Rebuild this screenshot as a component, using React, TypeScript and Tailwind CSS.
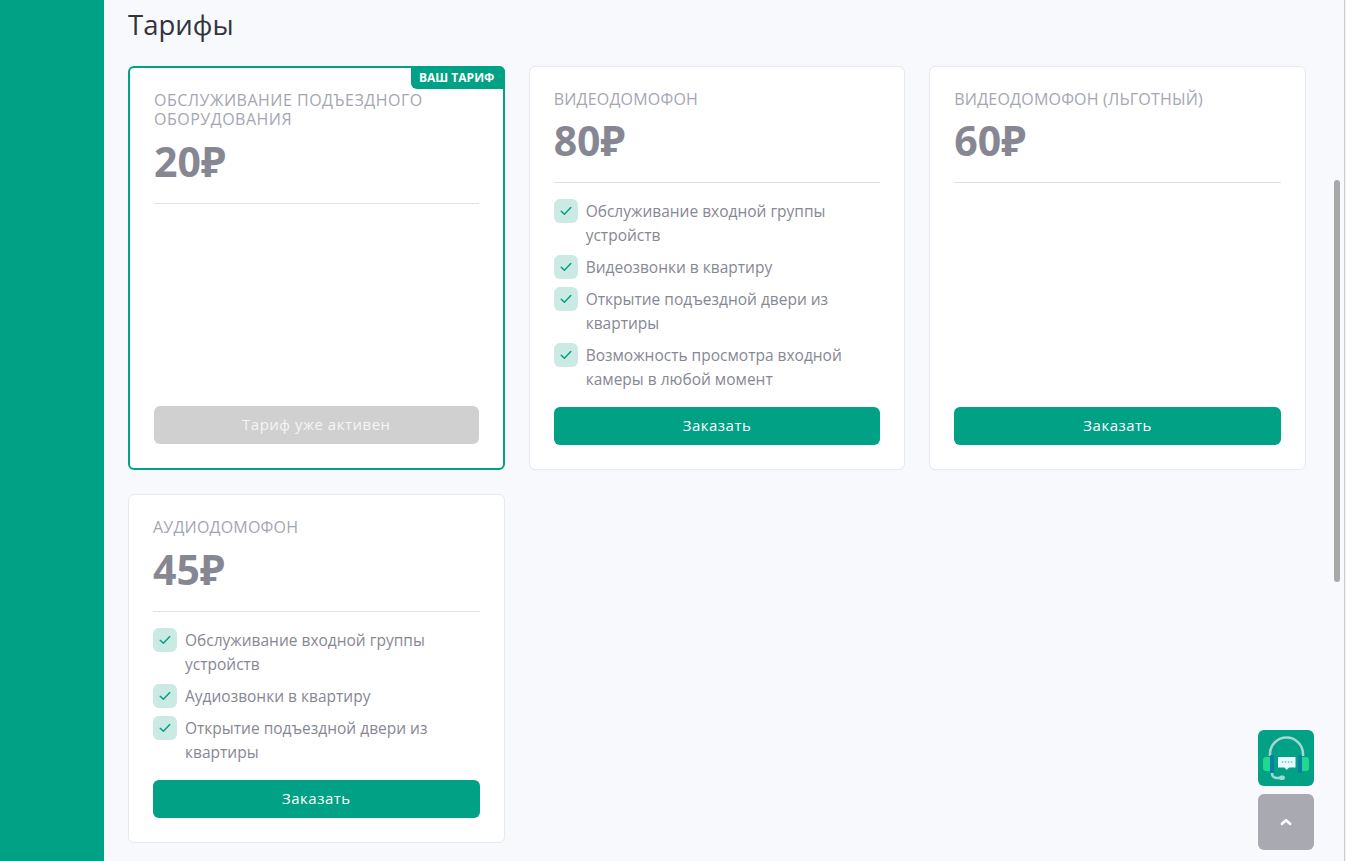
const CHECK = (
  <span className="flex h-6 w-6 shrink-0 items-center justify-center rounded-md bg-[#cceae4]">
    <svg width="12" height="10" viewBox="0 0 12 10" fill="none">
      <path d="M1.2 5.2 4.4 8.3 10.8 1.6" stroke="#00a184" strokeWidth="1.5" strokeLinecap="round" strokeLinejoin="round" />
    </svg>
  </span>
);

type Plan = { name: string; price: string; features: string[]; active?: boolean; last?: boolean };

function Card({ name, price, features, active, last }: Plan) {
  return (
    <div
      className={
        "relative flex flex-col rounded-md bg-white " +
        (active
          ? "border-2 border-[#00a184] px-6 pt-[23px] pb-6"
          : "border border-[#e6e8f2] px-6 pt-[23px] pb-6") +
        (last ? " h-[349px]" : " h-[404px]")
      }
    >
      {active && (
        <div className="absolute -right-0.5 -top-0.5 flex h-[23px] w-[94px] items-center justify-center rounded-tr-md rounded-bl-md bg-[#00a184] pr-0.5 text-[12px] font-bold text-white">
          ВАШ ТАРИФ
        </div>
      )}
      <div className={"text-[16px] leading-[19px] text-[#a5a6b3] " + (active ? "tracking-[0.5px]" : "tracking-[0.2px]")}>
        {name}
      </div>
      <div className={"h-[52px] text-[41px] font-bold leading-[52px] text-[#878794] " + (active || last ? "mt-[6px]" : "mt-[5px]")}>
        {price}
      </div>
      <div className="mt-4 border-t border-[#e2e2e6]" />
      <ul className="mt-4 flex flex-1 flex-col gap-2">
        {features.map((f) => (
          <li key={f} className="flex gap-2">
            {CHECK}
            <span className="text-[15.5px] leading-6 text-[#878794]">{f}</span>
          </li>
        ))}
      </ul>
      <button
        className={
          "h-[38px] w-full rounded-md pb-0.5 text-[15px] font-medium tracking-[0.5px] " +
          (active ? "bg-[#d0d0d0] text-[#f5f5f5]" : "bg-[#00a184] text-white")
        }
      >
        {active ? "Тариф уже активен" : "Заказать"}
      </button>
    </div>
  );
}

export default function App() {
  return (
    <div
      className="flex h-[861px] w-[1346px] overflow-hidden bg-[#f8f9fd]"
      style={{ fontFamily: '"Open Sans", "Noto Sans", sans-serif' }}
    >
      <aside className="w-[104px] shrink-0 bg-[#00a184]" />
      <main className="relative flex-1 border-r border-[#c9cad0] pl-6 pr-[38px]">
        <h1 className="h-[66px] pt-[8px] text-[27.5px] leading-[34px] text-[#33333d]">Тарифы</h1>
        <div className="grid grid-cols-3 gap-6">
          <Card active name="ОБСЛУЖИВАНИЕ ПОДЪЕЗДНОГО ОБОРУДОВАНИЯ" price="20₽" features={[]} />
          <Card
            name="ВИДЕОДОМОФОН"
            price="80₽"
            features={[
              "Обслуживание входной группы устройств",
              "Видеозвонки в квартиру",
              "Открытие подъездной двери из квартиры",
              "Возможность просмотра входной камеры в любой момент",
            ]}
          />
          <Card name="ВИДЕОДОМОФОН (ЛЬГОТНЫЙ)" price="60₽" features={[]} />
          <Card
            last
            name="АУДИОДОМОФОН"
            price="45₽"
            features={[
              "Обслуживание входной группы устройств",
              "Аудиозвонки в квартиру",
              "Открытие подъездной двери из квартиры",
            ]}
          />
        </div>
        <div className="absolute right-[4px] top-[180px] h-[402px] w-[6px] rounded-full bg-[#a8a8a8]" />
        <div className="absolute right-[30px] top-[730px] flex flex-col gap-2">
          <div className="h-14 w-14 rounded-md bg-[#00a184]">
            <svg width="56" height="56" viewBox="0 0 56 56" fill="none">
              <path d="M12 26v-2a16.500 16.500 0 0 1 33 0v2" stroke="#a6d5d4" strokeWidth="2.6" />
              <path d="M14 43c0 4 2 5 6 5h4" stroke="#a6d5d4" strokeWidth="2.6" strokeLinecap="round" />
              <rect x="21" y="45.500" width="6" height="4.500" rx="2.200" fill="#a6d5d4" />
              <path d="M5 30c0-2 1-3 3-3h4v14H8c-2 0-3-1-3-3z" fill="#1fd98f" />
              <path d="M51 30c0-2-1-3-3-3h-4v14h4c2 0 3-1 3-3z" fill="#1fd98f" />
              <rect x="12" y="25" width="4" height="18" rx="1" fill="#0a7fa3" />
              <rect x="40" y="25" width="4" height="18" rx="1" fill="#0a7fa3" />
              <path d="M20 27h17.500v10.500H31L28.700 40l-2.300-2.500H20z" fill="#e8fbff" />
              <circle cx="24.500" cy="32" r="0.800" fill="#3db7e0" />
              <circle cx="27.500" cy="32" r="0.800" fill="#3db7e0" />
              <circle cx="30.500" cy="32" r="0.800" fill="#3db7e0" />
              <circle cx="33.500" cy="32" r="0.800" fill="#3db7e0" />
            </svg>
          </div>
          <div className="flex h-14 w-14 items-center justify-center rounded-md bg-[#a9a9b2]">
            <svg width="12" height="8" viewBox="0 0 12 8" fill="none">
              <path d="M2 5.800 6 2.300l4 3.500" stroke="#fff" strokeWidth="2.800" strokeLinecap="round" strokeLinejoin="round" />
            </svg>
          </div>
        </div>
      </main>
      <div className="w-px shrink-0 bg-[#f4f5f9]" />
    </div>
  );
}
